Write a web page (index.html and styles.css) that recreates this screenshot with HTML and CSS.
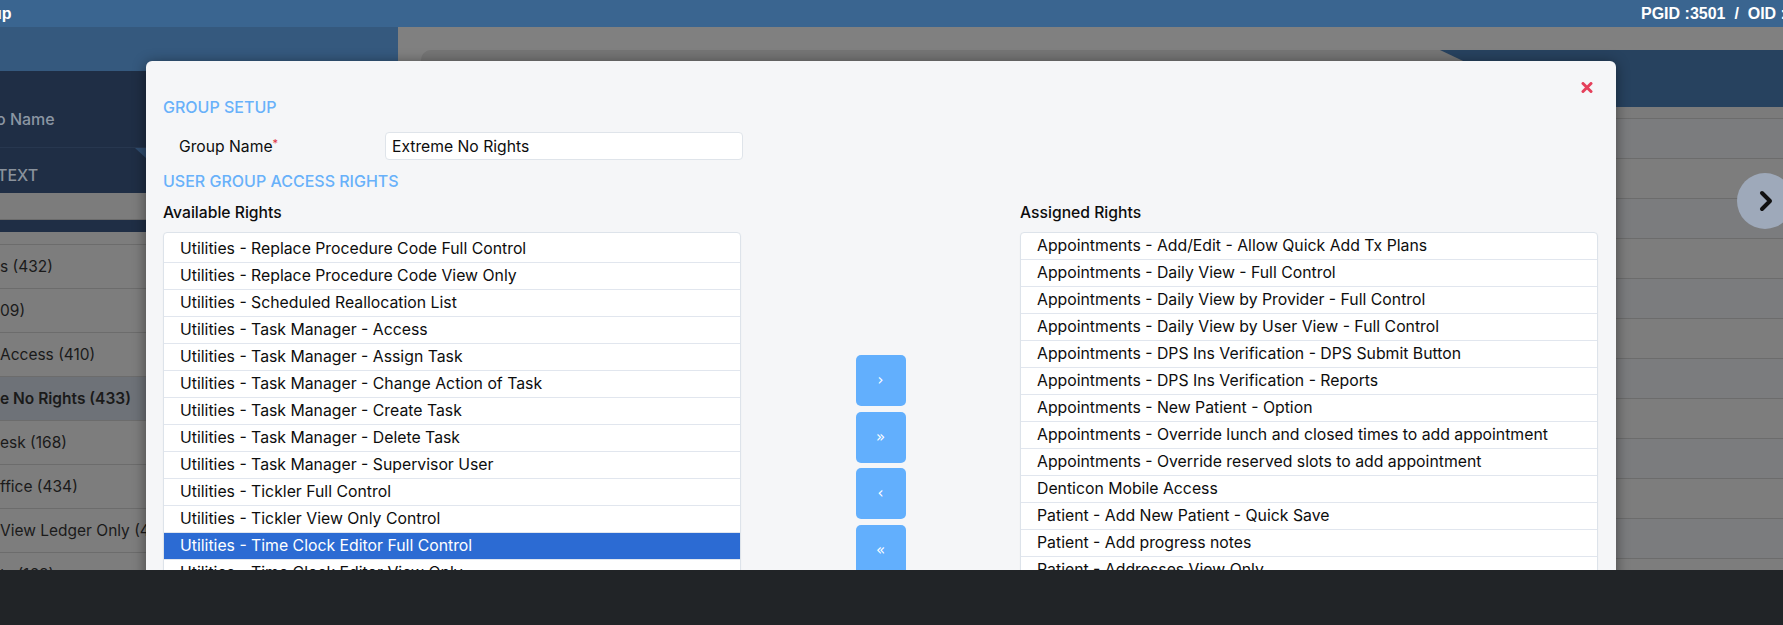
FILE: index.html
```html
<!DOCTYPE html>
<html lang="en">
<head>
<meta charset="utf-8">
<title>Group Setup</title>
<link rel="stylesheet" href="styles.css">
</head>
<body>
<div class="app">
  <header class="topbar">
    <span class="title">up</span>
    <span class="ids">PGID :3501 &nbsp;/&nbsp; OID :3501</span>
  </header>
  <div class="layout">
    <aside class="sidebar">
      <div class="sb-head"></div>
      <div class="sb-filter">
        <div class="sb-name">o Name</div>
        <div class="sb-text">TEXT<span class="notch"></span></div>
      </div>
      <div class="sb-search"></div>
      <div class="sb-band"></div>
      <ul class="sb-list">
        <li>s (432)</li>
        <li>09)</li>
        <li>Access (410)</li>
        <li class="active">e No Rights (433)</li>
        <li>esk (168)</li>
        <li>ffice (434)</li>
        <li>View Ledger Only (411)</li>
        <li>ts (168)</li>
      </ul>
    </aside>
    <main class="content">
      <div class="card">
        <div class="card-head"><div class="tab"></div></div>
        <div class="card-gap"></div>
        <div class="card-row"></div>
        <div class="card-row"></div>
        <div class="card-row"></div>
        <div class="card-row"></div>
        <div class="card-row"></div>
        <div class="card-row"></div>
        <div class="card-row"></div>
        <div class="card-row"></div>
        <div class="card-row"></div>
        <div class="card-row"></div>
        <div class="card-row"></div>
      </div>
      <button class="next-btn" aria-label="Next">
        <svg width="16" height="22" viewBox="0 0 16 22"><polyline points="4,3 12,11 4,19" fill="none" stroke="#111" stroke-width="4" stroke-linecap="round" stroke-linejoin="round"/></svg>
      </button>
    </main>
  </div>

  <div class="modal">
    <div class="modal-head">
      <button class="close" aria-label="Close">
        <svg width="12" height="11" viewBox="0 0 12 11"><path d="M2 1.5 L10 9.5 M10 1.5 L2 9.5" stroke="#e5405b" stroke-width="3" stroke-linecap="round"/></svg>
      </button>
    </div>
    <div class="section-title">GROUP SETUP</div>
    <div class="form-row">
      <label class="form-label">Group Name<span class="req">*</span></label>
      <input class="form-input" type="text" value="Extreme No Rights">
    </div>
    <div class="section-title access">USER GROUP ACCESS RIGHTS</div>
    <div class="rights">
      <div class="rights-col">
        <div class="col-label">Available Rights</div>
        <ul class="list list-left">
          <li>Utilities - Replace Procedure Code Full Control</li>
          <li>Utilities - Replace Procedure Code View Only</li>
          <li>Utilities - Scheduled Reallocation List</li>
          <li>Utilities - Task Manager - Access</li>
          <li>Utilities - Task Manager - Assign Task</li>
          <li>Utilities - Task Manager - Change Action of Task</li>
          <li>Utilities - Task Manager - Create Task</li>
          <li>Utilities - Task Manager - Delete Task</li>
          <li>Utilities - Task Manager - Supervisor User</li>
          <li>Utilities - Tickler Full Control</li>
          <li>Utilities - Tickler View Only Control</li>
          <li class="selected">Utilities - Time Clock Editor Full Control</li>
          <li>Utilities - Time Clock Editor View Only</li>
          <li>Utilities - Time Clock Reports</li>
        </ul>
      </div>
      <div class="move-col">
        <button class="move-btn">&rsaquo;</button>
        <button class="move-btn">&raquo;</button>
        <button class="move-btn">&lsaquo;</button>
        <button class="move-btn">&laquo;</button>
      </div>
      <div class="rights-col">
        <div class="col-label">Assigned Rights</div>
        <ul class="list">
          <li>Appointments - Add/Edit - Allow Quick Add Tx Plans</li>
          <li>Appointments - Daily View - Full Control</li>
          <li>Appointments - Daily View by Provider - Full Control</li>
          <li>Appointments - Daily View by User View - Full Control</li>
          <li>Appointments - DPS Ins Verification - DPS Submit Button</li>
          <li>Appointments - DPS Ins Verification - Reports</li>
          <li>Appointments - New Patient - Option</li>
          <li>Appointments - Override lunch and closed times to add appointment</li>
          <li>Appointments - Override reserved slots to add appointment</li>
          <li>Denticon Mobile Access</li>
          <li>Patient - Add New Patient - Quick Save</li>
          <li>Patient - Add progress notes</li>
          <li>Patient - Addresses View Only</li>
          <li>Patient - Alerts View Only</li>
        </ul>
      </div>
    </div>
  </div>
</div>
<div class="footer-bar"></div>
</body>
</html>
```

FILE: styles.css
```css
* { box-sizing: border-box; }

body {
  margin: 0;
  width: 1783px;
  height: 625px;
  overflow: hidden;
  display: flex;
  flex-direction: column;
  font-family: Inter, "DejaVu Sans", sans-serif;
  background: #212427;
}

.app {
  position: relative;
  height: 570px;
  flex: none;
  overflow: hidden;
  display: flex;
  flex-direction: column;
  background: #808080;
}

/* top bar */
.topbar {
  height: 27px;
  flex: none;
  display: flex;
  align-items: center;
  justify-content: space-between;
  background: #3a6590;
  color: #fff;
  font-family: "Liberation Sans", Arial, sans-serif;
  font-weight: bold;
  font-size: 16px;
}
.title { margin-left: -8px; }
.ids { width: 142px; overflow: hidden; white-space: nowrap; }

.layout {
  flex: 1;
  display: flex;
  min-height: 0;
}

/* sidebar */
.sidebar {
  width: 398px;
  flex: none;
  display: flex;
  flex-direction: column;
  background: #7c7c7c;
  overflow: hidden;
}
.sidebar > * { flex: none; }
.sb-head { height: 44px; background: #35597e; }
.sb-filter { background: #1f2e45; }
.sb-name {
  height: 77px;
  padding-top: 38px;
  line-height: 20px;
  font-size: 16px;
  font-weight: 500;
  color: #8b96a3;
  border-bottom: 1px solid #27374f;
  margin-left: -4px;
}
.sb-text {
  position: relative;
  height: 45px;
  padding-top: 17px;
  line-height: 20px;
  font-size: 16px;
  font-weight: 500;
  color: #8a929c;
  margin-left: -3px;
}
.notch {
  position: absolute;
  left: 138px;
  top: 0;
  width: 0;
  height: 0;
  border-top: 11px solid #2f4c6e;
  border-left: 12px solid transparent;
}
.sb-search { height: 27px; background: #7c7c7c; border-bottom: 1px solid #6b6b6b; }
.sb-band { height: 12px; background: #1f2e45; }
.sb-list {
  list-style: none;
  margin: 0;
  padding: 12px 0 0;
  background: #7d7d7d;
}
.sb-list li {
  height: 44px;
  border-top: 1px solid #6c6c6c;
  line-height: 43px;
  font-size: 15.5px;
  color: #1a1a1a;
  white-space: nowrap;
}
.sb-list li.active {
  background: #6e7278;
  font-weight: 600;
}

/* main content behind modal */
.content {
  flex: 1;
  position: relative;
  padding: 23px 0 0 23px;
}
.card {
  height: 100%;
  border-top-left-radius: 10px;
  background: #7d7d7d;
  overflow: hidden;
}
.card-head {
  height: 57px;
  display: flex;
  justify-content: flex-end;
  background: #757575;
}
.tab {
  width: 343px;
  background: #27425f;
  clip-path: polygon(0 0, 100% 0, 100% 100%, 35% 100%);
}
.card-gap { height: 12px; border-bottom: 1px solid #6c6c6c; background: #7b7b7b; }
.card-row { height: 40px; border-bottom: 1px solid #6c6c6c; }
.card-row:nth-child(odd) { background: #7b7c7e; }

.next-btn {
  position: absolute;
  right: -10px;
  top: 146px;
  width: 56px;
  height: 56px;
  border: 0;
  border-radius: 50%;
  background: #9ea9ba;
  display: flex;
  align-items: center;
  justify-content: center;
  padding: 0 0 0 2px;
}

/* modal */
.modal {
  position: absolute;
  left: 146px;
  top: 61px;
  width: 1470px;
  height: 620px;
  padding: 0 18px 0 17px;
  background: #f5f6f8;
  border-radius: 6px;
  box-shadow: 0 2px 14px rgba(0, 0, 0, 0.45);
  color: #111;
}
.modal-head {
  height: 36px;
  padding: 21px 5px 0 0;
  display: flex;
  justify-content: flex-end;
  align-items: flex-start;
}
.close {
  border: 0;
  padding: 0;
  background: none;
  width: 12px;
  height: 11px;
  display: block;
}
.close svg { display: block; }

.section-title {
  font-size: 16px;
  font-weight: 500;
  line-height: 20px;
  color: #68b1fa;
}
.section-title.access { margin-top: 11px; }

.form-row {
  display: flex;
  align-items: center;
  height: 28px;
  margin-top: 15px;
}
.form-label {
  width: 222px;
  padding-left: 16px;
  font-size: 15.7px;
  color: #0d0d0d;
}
.req {
  color: #e0303f;
  font-size: 11px;
  vertical-align: 5px;
}
.form-input {
  width: 358px;
  height: 28px;
  padding: 0 6px;
  border: 1px solid #dfe4ea;
  border-radius: 4px;
  background: #fff;
  font-family: inherit;
  font-size: 15.7px;
  color: #0d0d0d;
}

.rights {
  display: grid;
  grid-template-columns: 578px 1fr 578px;
  margin-top: 12px;
}
.col-label {
  font-size: 15.7px;
  font-weight: 500;
  line-height: 20px;
  color: #0d0d0d;
}
.list {
  list-style: none;
  margin: 9px 0 0;
  padding: 0;
  height: 420px;
  overflow: hidden;
  background: #fff;
  border: 1px solid #dde3ea;
  border-radius: 4px;
  box-shadow: 0 1px 2px rgba(0, 0, 0, 0.04);
}
.list-left { padding-top: 3px; }
.list li {
  height: 27px;
  padding-left: 16px;
  line-height: 26px;
  border-bottom: 1px solid #e1e6ee;
  font-size: 15.8px;
  color: #0d0d0d;
  white-space: nowrap;
}
.list li.selected {
  background: #2c6bd3;
  color: #fff;
}

.move-col {
  display: flex;
  flex-direction: column;
  align-items: center;
  gap: 5.7px;
  padding-top: 152px;
}
.move-btn {
  width: 50px;
  height: 51px;
  border: 0;
  border-radius: 5px;
  background: #62affd;
  color: #fff;
  font-family: "DejaVu Sans", sans-serif;
  font-size: 15px;
  line-height: 1;
  padding: 0;
}

.footer-bar {
  height: 55px;
  flex: none;
  background: #212427;
}
```
